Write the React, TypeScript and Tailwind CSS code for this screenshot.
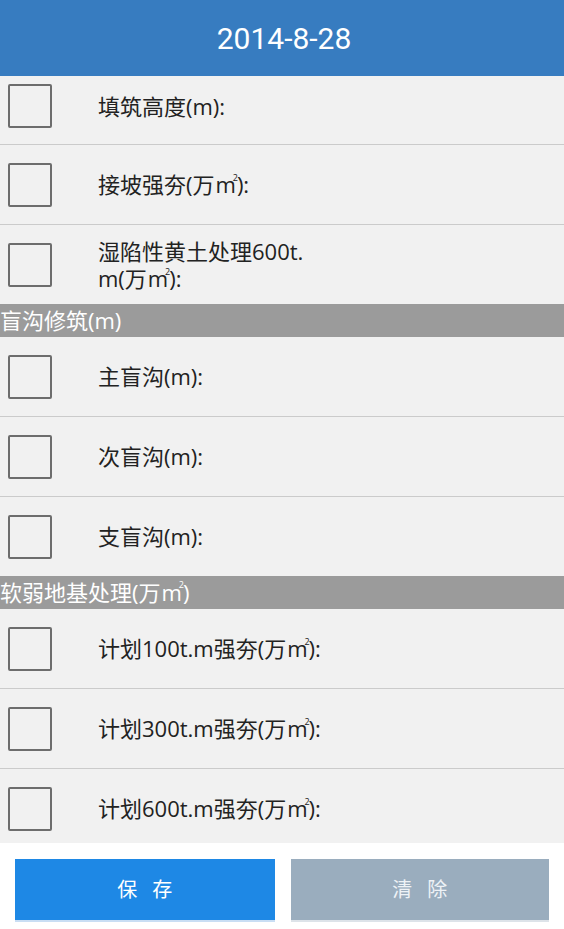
import React from "react";

const FONT = { fontFamily: '"Open Sans", "Noto Sans CJK SC", sans-serif' };

function M2() {
  return (
    <span className="relative ml-[1px] mr-[1px]">
      m
      <span className="absolute right-[-2px] top-[4px] text-[9px] leading-none">2</span>
    </span>
  );
}

function Row({ children, first }: { children: React.ReactNode; first?: boolean }) {
  return (
    <div
      className={
        "flex shrink-0 items-center bg-[#f1f1f1] " +
        (first ? "h-[68px] pb-[8px]" : "h-[79px]")
      }
    >
      <div className="ml-[8px] h-[44px] w-[44px] shrink-0 rounded-[2px] border-2 border-[#6d6d6d]" />
      <div className="ml-[46px] text-[22px] leading-[27px] text-[#222]">{children}</div>
    </div>
  );
}

function Divider() {
  return <div className="h-px shrink-0 bg-[#cbcbcb]" />;
}

function Section({ children }: { children: React.ReactNode }) {
  return (
    <div className="flex h-[33px] shrink-0 items-center bg-[#9b9b9b] text-[22px] text-white">
      {children}
    </div>
  );
}

export default function App() {
  return (
    <div className="flex h-[929px] w-[564px] flex-col overflow-hidden bg-white" style={FONT}>
      <div
        className="flex h-[76px] shrink-0 items-center justify-center bg-[#377cc0] pl-[4px] text-[30px] text-white"
        style={{ fontFamily: 'Roboto, sans-serif' }}
      >
        2014-8-28
      </div>
      <div className="flex flex-1 flex-col overflow-hidden">
        <Row first>填筑高度(m):</Row>
        <Divider />
        <Row>
          接坡强夯(万<M2 />):
        </Row>
        <Divider />
        <Row>
          湿陷性黄土处理600t.
          <br />
          m(万<M2 />):
        </Row>
        <Section>盲沟修筑(m)</Section>
        <Row>主盲沟(m):</Row>
        <Divider />
        <Row>次盲沟(m):</Row>
        <Divider />
        <Row>支盲沟(m):</Row>
        <Section>
          软弱地基处理(万<M2 />)
        </Section>
        <Row>
          计划100t.m强夯(万<M2 />):
        </Row>
        <Divider />
        <Row>
          计划300t.m强夯(万<M2 />):
        </Row>
        <Divider />
        <Row>
          计划600t.m强夯(万<M2 />):
        </Row>
      </div>
      <div className="flex h-[86px] shrink-0 gap-[16px] bg-white px-[15px] pt-[16px]">
        <button className="flex h-[63px] w-[261px] items-center justify-center gap-[15px] border-b-2 border-[#c9def4] bg-[#1e88e5] text-[20px] text-white">
          <span>保</span>
          <span>存</span>
        </button>
        <button className="flex h-[63px] w-[260px] items-center justify-center gap-[15px] border-b-2 border-[#dde3e9] bg-[#9aadbe] text-[20px] text-[#eef2f6]">
          <span>清</span>
          <span>除</span>
        </button>
      </div>
    </div>
  );
}
